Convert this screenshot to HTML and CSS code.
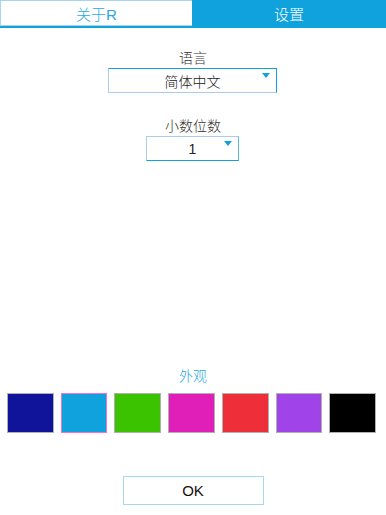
FILE: index.html
```html
<!DOCTYPE html>
<html>
<head>
<meta charset="utf-8">
<link rel="stylesheet" href="styles.css">
</head>
<body>
<div class="tabs">
  <div class="tab tab-off">关于R</div>
  <div class="tab tab-on">设置</div>
</div>
<div class="main">
  <div class="label">语言</div>
  <div class="select select-lang">简体中文<span class="arrow"></span></div>
  <div class="label label-dec">小数位数</div>
  <div class="select select-dec">1<span class="arrow"></span></div>
  <div class="label label-look">外观</div>
  <div class="swatches">
    <div class="sw" style="background:#10149a"></div>
    <div class="sw sel" style="background:#10a2dd"></div>
    <div class="sw" style="background:#3cc300"></div>
    <div class="sw" style="background:#e01eb8"></div>
    <div class="sw" style="background:#ee2f3a"></div>
    <div class="sw" style="background:#a044ea"></div>
    <div class="sw" style="background:#000000"></div>
  </div>
  <div class="ok">OK</div>
</div>
</body>
</html>
```
FILE: styles.css
```css
html, body {
  margin: 0;
  padding: 0;
  background: #fff;
  font-family: "Liberation Sans", "Noto Sans CJK SC", sans-serif;
  color: #333;
}
.tabs {
  display: flex;
  height: 26px;
  border-bottom: 2px solid #10a2dd;
}
.tab {
  display: flex;
  align-items: center;
  justify-content: center;
  font-size: 15px;
  font-weight: 300;
  box-sizing: border-box;
}
.tab-off {
  width: 192px;
  color: #2aa8e0;
  border: 1px solid #a8d4f0;
  border-right: none;
  background: #fff;
}
.tab-on {
  flex: 1;
  background: #10a2dd;
  color: #fff;
}
.main {
  display: flex;
  flex-direction: column;
  align-items: center;
}
.label {
  font-size: 14px;
  font-weight: 300;
  line-height: 17px;
  margin-top: 22px;
  color: #333;
}
.label-dec { margin-top: 25px; }
.label-look {
  margin-top: 207px;
  color: #2aa8e0;
}
.select {
  position: relative;
  box-sizing: border-box;
  height: 25px;
  margin-top: 1px;
  margin-right: 1px;
  display: flex;
  align-items: center;
  justify-content: center;
  font-size: 14px;
  font-weight: 300;
  color: #222;
  border: 1px solid #10a2dd;
}
.select-lang {
  width: 169px;
  border-left-color: #a9cdee;
  border-bottom-color: #a9cdee;
}
.select-dec {
  width: 93px;
  border-left-color: #a9cdee;
  border-top-color: #a9cdee;
  border-right-color: #5ab8e8;
}
.arrow {
  position: absolute;
  right: 6px;
  top: 4px;
  width: 0;
  height: 0;
  border-left: 4px solid transparent;
  border-right: 4px solid transparent;
  border-top: 5px solid #10a2dd;
}
.swatches {
  display: flex;
  gap: 7px;
  align-self: stretch;
  padding: 0 10px 0 7px;
  margin-top: 8px;
}
.sw {
  flex: 1 1 0;
  height: 40px;
  box-sizing: border-box;
  border: 1px solid #b0b0b0;
}
.sw.sel {
  border-color: #ff6ccc;
}
.ok {
  margin-top: 43px;
  width: 141px;
  height: 29px;
  box-sizing: border-box;
  border: 1px solid #a8d8f0;
  display: flex;
  align-items: center;
  justify-content: center;
  font-size: 15px;
  color: #111;
}
```
